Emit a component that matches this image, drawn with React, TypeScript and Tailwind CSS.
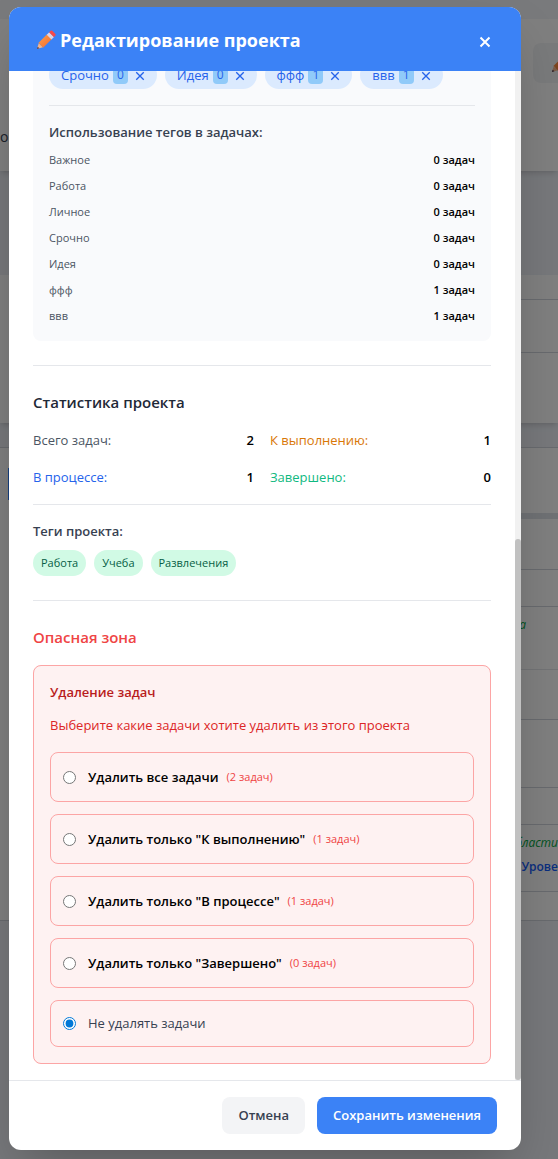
import { useState } from "react";

const editTags = [
  { name: "Срочно", count: 0 },
  { name: "Идея", count: 0 },
  { name: "ффф", count: 1 },
  { name: "ввв", count: 1 },
];

const usage = [
  { name: "Важное", count: 0 },
  { name: "Работа", count: 0 },
  { name: "Личное", count: 0 },
  { name: "Срочно", count: 0 },
  { name: "Идея", count: 0 },
  { name: "ффф", count: 1 },
  { name: "ввв", count: 1 },
];

const stats = [
  { label: "Всего задач:", value: 2, color: "text-[#4b5563]" },
  { label: "К выполнению:", value: 1, color: "text-[#d97706]" },
  { label: "В процессе:", value: 1, color: "text-[#2563eb]" },
  { label: "Завершено:", value: 0, color: "text-[#10b981]" },
];

const projectTags = ["Работа", "Учеба", "Развлечения"];

const deleteOptions = [
  { id: "all", label: "Удалить все задачи", count: 2 },
  { id: "todo", label: 'Удалить только "К выполнению"', count: 1 },
  { id: "progress", label: 'Удалить только "В процессе"', count: 1 },
  { id: "done", label: 'Удалить только "Завершено"', count: 0 },
];

function Pencil({ className }: { className: string }) {
  return (
    <svg viewBox="0 0 22 22" className={className} aria-hidden="true">
      <defs>
        <linearGradient id="pencilBody" x1="0" y1="0" x2="1" y2="1">
          <stop offset="0" stopColor="#ffa04a" />
          <stop offset="1" stopColor="#f26a2e" />
        </linearGradient>
      </defs>
      <path d="M1 21 L3 14.6 L7.6 19 Z" fill="#f3b58c" />
      <path d="M1 21 L1.8 18.3 L3.8 20.2 Z" fill="#4b3a52" />
      <path d="M2.6 14.4 L12.2 4.8 L17.4 10 L7.8 19.6 Q6.9 17.8 5.4 17 Q4.4 15.2 2.6 14.4 Z" fill="url(#pencilBody)" />
      <path d="M11.8 5.2 L14.6 2.4 L19.8 7.6 L17 10.4 Z" fill="#dcd3e6" />
      <path d="M14.4 2.6 L16.1 .9 Q17 .1 17.9 .9 L21.3 4.3 Q22 5.2 21.3 6 L19.6 7.8 Z" fill="#f8484a" />
    </svg>
  );
}

function Cross({ className }: { className: string }) {
  return (
    <svg viewBox="0 0 12 12" className={className} fill="none" stroke="currentColor" aria-hidden="true">
      <path d="M1.5 1.5 L10.5 10.5 M10.5 1.5 L1.5 10.5" />
    </svg>
  );
}

function PageBehind() {
  return (
    <div className="flex flex-col bg-[#eef1f7]" aria-hidden="true">
      <div className="h-[19px] bg-[#f3f5f9]" />
      <div className="flex h-38 items-start justify-between bg-white pt-6 shadow-md">
        <span className="pt-21 text-sm text-gray-700">о</span>
        <span className="flex h-10 w-[25px] items-center overflow-hidden rounded-l-lg bg-gray-100 pl-[18px]">
          <Pencil className="size-5 shrink-0" />
        </span>
      </div>
      <div className="h-26" />
      <div className="h-37 bg-white pt-6 pl-5 shadow-md">
        <div className="h-[54px] border-y border-gray-300" />
      </div>
      <div className="h-6" />
      <div className="flex flex-col border-y border-gray-300 bg-white">
        <div className="h-[65px] pt-5 pl-2">
          <div className="h-8 w-4 bg-blue-500" />
        </div>
        <div className="ml-5 flex flex-col">
          <div className="h-1.5 bg-[#dfe2e8]" />
          <div className="h-[51px] border-b border-gray-300" />
          <div className="h-[37px] border-b border-gray-300" />
          <div className="flex h-[63px] justify-end border-b border-gray-200 pt-2 pr-8">
            <span className="text-xs leading-5 text-green-600 italic">а</span>
          </div>
          <div className="h-[50px] border-b border-gray-300" />
          <div className="h-[68px] border-b border-gray-300" />
          <div className="h-[37px] border-b border-gray-300" />
          <div className="flex h-[67px] flex-col items-end border-b border-gray-300 pt-2">
            <span className="text-xs leading-5 text-green-600 italic">бласти</span>
            <span className="pt-1 text-xs leading-5 font-semibold text-blue-600">Урове</span>
          </div>
          <div className="h-7" />
        </div>
      </div>
    </div>
  );
}

export default function App() {
  const [choice, setChoice] = useState("none");

  return (
    <div className="relative h-screen overflow-hidden bg-[#eef1f7] font-['Open_Sans','Noto_Sans',sans-serif]">
      <PageBehind />
      <div className="absolute inset-0 flex bg-black/50 pt-[7px] pr-[37px] pb-[9px] pl-[9px]">
        <div
          role="dialog"
          aria-modal="true"
          aria-labelledby="dialog-title"
          className="flex min-w-0 flex-1 flex-col overflow-hidden rounded-xl bg-white shadow-2xl"
        >
          <header className="flex h-16 shrink-0 items-center justify-between bg-[#3b82f6] px-6 pt-0.5 text-white">
            <h2 id="dialog-title" className="flex items-center gap-1 pl-[3px] text-lg leading-7 font-bold">
              <Pencil className="size-5" />
              Редактирование проекта
            </h2>
            <button type="button" aria-label="Закрыть" className="flex size-6 items-center justify-center pt-1">
              <Cross className="size-3 stroke-2" />
            </button>
          </header>

          <div className="flex min-h-0 flex-1">
            <div className="flex min-w-0 flex-1 flex-col justify-end overflow-hidden px-6 pb-4">
              <section className="shrink-0 rounded-lg bg-[#f9fafc] px-4 pb-4">
                <div className="flex gap-2">
                  {editTags.map((tag) => (
                    <span
                      key={tag.name}
                      className="flex h-7 items-center gap-1 rounded-full bg-[#dbeafe] px-3 text-[13px] leading-5 text-[#2563eb]"
                    >
                      {tag.name}
                      <span className="rounded bg-[#90caf9] px-1 text-xs leading-[18px]">{tag.count}</span>
                      <button
                        type="button"
                        aria-label={`Удалить тег ${tag.name}`}
                        className="flex w-[13px] items-center justify-end pt-0.5"
                      >
                        <Cross className="size-[10px] stroke-[1.6]" />
                      </button>
                    </span>
                  ))}
                </div>
                <div className="mt-4 border-t border-[#e5e7eb] pt-4">
                  <h3 className="mb-2 text-[13px] leading-[21px] font-semibold text-[#374151]">
                    Использование тегов в задачах:
                  </h3>
                  <ul className="flex flex-col gap-2 text-[11px] leading-[18px]">
                    {usage.map((row) => (
                      <li key={row.name} className="flex justify-between text-[#4b5563]">
                        <span>{row.name}</span>
                        <span className="font-semibold text-black">{row.count} задач</span>
                      </li>
                    ))}
                  </ul>
                </div>
              </section>

              <section className="mt-6 shrink-0 border-t border-[#e5e7eb] pt-6">
                <h3 className="text-[15px] leading-6 font-semibold text-[#1f2937]">Статистика проекта</h3>
                <dl className="mt-4 grid grid-cols-2 gap-4 text-[13px] leading-[21px]">
                  {stats.map((s) => (
                    <div key={s.label} className="flex justify-between">
                      <dt className={s.color}>{s.label}</dt>
                      <dd className="font-semibold text-black">{s.value}</dd>
                    </div>
                  ))}
                </dl>
                <div className="mt-4 border-t border-[#e5e7eb] pt-4">
                  <h4 className="text-[13px] leading-[21px] font-semibold text-[#374151]">Теги проекта:</h4>
                  <div className="mt-2 flex gap-2">
                    {projectTags.map((tag) => (
                      <span
                        key={tag}
                        className="rounded-full bg-[#d1fae5] px-2 py-1 text-[11px] leading-[18px] text-[#065f46]"
                      >
                        {tag}
                      </span>
                    ))}
                  </div>
                </div>
              </section>

              <section className="mt-6 shrink-0 border-t border-[#e5e7eb] pt-6">
                <h3 className="text-[15px] leading-6 font-semibold text-[#ef4444]">Опасная зона</h3>
                <fieldset className="mt-4 rounded-lg border border-[#fca5a5] bg-[#fef2f2] p-4">
                  <h4 className="text-[13px] leading-[21px] font-semibold text-[#b91c1c]">Удаление задач</h4>
                  <p className="mt-3 text-[13px] leading-[21px] text-[#dc2626]">
                    Выберите какие задачи хотите удалить из этого проекта
                  </p>
                  <div className="mt-4 flex flex-col gap-3">
                    {deleteOptions.map((o) => (
                      <label
                        key={o.id}
                        className="flex h-[50px] items-center rounded-lg border border-[#fca5a5] px-3 text-[13px] leading-6"
                      >
                        <input
                          type="radio"
                          name="delete"
                          checked={choice === o.id}
                          onChange={() => setChoice(o.id)}
                          className="mr-3 size-[13px] accent-[#0078d7]"
                        />
                        <span className="font-semibold text-black">{o.label}</span>
                        <span className="ml-2 text-[11px] text-[#ef4444]">({o.count} задач)</span>
                      </label>
                    ))}
                    <label className="flex h-[47px] items-center rounded-lg border border-[#fca5a5] px-3 text-[13px] leading-[21px] text-[#374151]">
                      <input
                        type="radio"
                        name="delete"
                        checked={choice === "none"}
                        onChange={() => setChoice("none")}
                        className="mr-3 size-[13px] accent-[#0078d7]"
                      />
                      Не удалять задачи
                    </label>
                  </div>
                </fieldset>
              </section>
            </div>
            <div className="flex w-1.5 shrink-0 flex-col bg-[#f1f1f1]" aria-hidden="true">
              <div className="grow-[13]" />
              <div className="grow-[15] rounded-full bg-[#c1c1c1]" />
            </div>
          </div>

          <footer className="flex shrink-0 justify-end gap-3 border-t border-[#e5e7eb] px-6 py-4 text-[13px] leading-[21px] font-semibold">
            <button type="button" className="rounded-lg bg-[#f3f4f6] px-4 py-2 text-[#374151]">
              Отмена
            </button>
            <button type="button" className="rounded-lg bg-[#3b82f6] px-4 py-2 text-white">
              Сохранить изменения
            </button>
          </footer>
        </div>
      </div>
    </div>
  );
}
